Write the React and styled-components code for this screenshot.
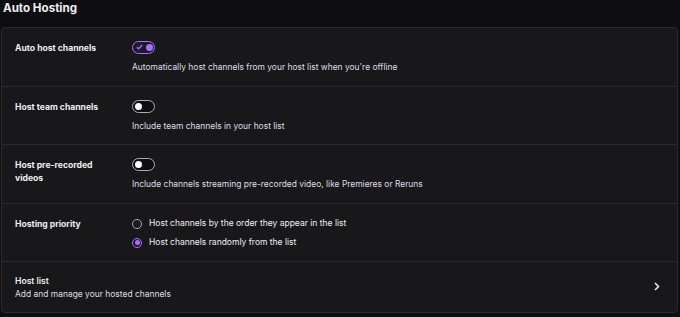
import React from "react";
import styled, { createGlobalStyle } from "styled-components";

const Global = createGlobalStyle`
  html, body { margin: 0; padding: 0; background: #0e0e10; }
  body { font-family: Inter, "Noto Sans", sans-serif; color: #efeff1; }
  * { box-sizing: border-box; }
`;

const Page = styled.div`
  width: 680px;
  height: 317px;
  padding: 0 2px 0 1px;
  overflow: hidden;
`;

const Title = styled.h2`
  margin: 0;
  padding: 1px 0 0 2px;
  height: 27px;
  font-size: 11.6px;
  font-weight: 700;
  line-height: 15px;
  color: #efeff1;
`;

const Panel = styled.div`
  background: #18181b;
  border: 1px solid #2a2a2e;
  border-radius: 4px;
`;

const Row = styled.div`
  display: grid;
  grid-template-columns: 117px 1fr;
  padding: 13px 13px 0 13px;
  height: ${(p) => p.$h}px;
  border-top: ${(p) => (p.$first ? "none" : "1px solid #2a2a2e")};
`;

const Label = styled.div`
  font-size: 8.6px;
  font-weight: 700;
  line-height: 13px;
  padding-top: 1px;
  padding-right: 22px;
`;

const Control = styled.div`
  display: flex;
  flex-direction: column;
  align-items: flex-start;
`;

const Desc = styled.div`
  font-size: 8.45px;
  line-height: 13px;
  color: #dedee3;
  margin-top: ${(p) => p.$mt || 0}px;
`;

const ToggleTrack = styled.div`
  position: relative;
  width: 23px;
  height: 13px;
  border-radius: 7px;
  border: 1.5px solid ${(p) => (p.$on ? "#a970ff" : "#adadb8")};
  background: ${(p) => (p.$on ? "#1f1a29" : "#0e0e10")};
`;

const Knob = styled.div`
  position: absolute;
  top: 1.5px;
  ${(p) => (p.$on ? "right: 1.5px;" : "left: 1.5px;")}
  width: 7px;
  height: 7px;
  border-radius: 50%;
  background: ${(p) => (p.$on ? "#a970ff" : "#ffffff")};
`;

const Check = styled.svg`
  position: absolute;
  left: 2.5px;
  top: 2px;
`;

const Toggle = ({ on }) => (
  <ToggleTrack $on={on}>
    {on && (
      <Check width="7" height="6" viewBox="0 0 7 6">
        <path d="M0.8 3.2 L2.6 4.8 L6.2 1" stroke="#a970ff" strokeWidth="1.3" fill="none" />
      </Check>
    )}
    <Knob $on={on} />
  </ToggleTrack>
);

const RadioList = styled.div`
  display: flex;
  flex-direction: column;
  gap: 6px;
`;

const RadioRow = styled.div`
  display: flex;
  align-items: center;
  gap: 7px;
  font-size: 8.5px;
  line-height: 13px;
`;

const RadioCircle = styled.div`
  width: 10px;
  height: 10px;
  border-radius: 50%;
  border: 1.5px solid ${(p) => (p.$on ? "#a970ff" : "#adadb8")};
  display: flex;
  align-items: center;
  justify-content: center;
  &::after {
    content: "";
    display: ${(p) => (p.$on ? "block" : "none")};
    width: 5px;
    height: 5px;
    border-radius: 50%;
    background: #a970ff;
  }
`;

const LinkRow = styled.div`
  display: flex;
  justify-content: space-between;
  align-items: flex-start;
  padding: 13px 17px 0 13px;
  height: 51px;
  border-top: 1px solid #2a2a2e;
`;

const LinkTitle = styled.div`
  font-size: 8.6px;
  font-weight: 600;
  line-height: 13px;
`;

const Chevron = styled.svg`
  margin-top: 7px;
`;

export default function App() {
  return (
    <Page>
      <Global />
      <Title>Auto Hosting</Title>
      <Panel>
        <Row $first $h={58}>
          <Label>Auto host channels</Label>
          <Control>
            <Toggle on />
            <Desc $mt={7}>Automatically host channels from your host list when you're offline</Desc>
          </Control>
        </Row>
        <Row $h={58}>
          <Label>Host team channels</Label>
          <Control>
            <Toggle />
            <Desc $mt={7}>Include team channels in your host list</Desc>
          </Control>
        </Row>
        <Row $h={59}>
          <Label>Host pre-recorded videos</Label>
          <Control>
            <Toggle />
            <Desc $mt={7}>Include channels streaming pre-recorded video, like Premieres or Reruns</Desc>
          </Control>
        </Row>
        <Row $h={58}>
          <Label>Hosting priority</Label>
          <Control>
            <RadioList>
              <RadioRow>
                <RadioCircle />
                Host channels by the order they appear in the list
              </RadioRow>
              <RadioRow>
                <RadioCircle $on />
                Host channels randomly from the list
              </RadioRow>
            </RadioList>
          </Control>
        </Row>
        <LinkRow>
          <div>
            <LinkTitle>Host list</LinkTitle>
            <Desc>Add and manage your hosted channels</Desc>
          </div>
          <Chevron width="6" height="9" viewBox="0 0 6 9">
            <path d="M1 1 L4.5 4.5 L1 8" stroke="#efeff1" strokeWidth="1.5" fill="none" />
          </Chevron>
        </LinkRow>
      </Panel>
    </Page>
  );
}
